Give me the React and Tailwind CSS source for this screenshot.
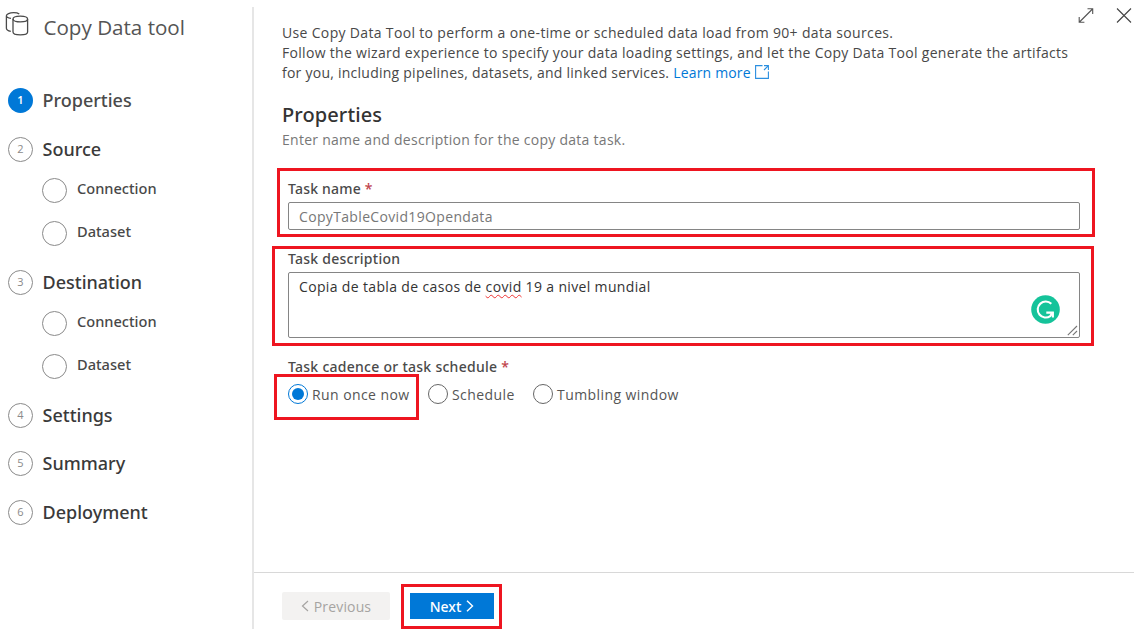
const steps = [
  { n: 1, label: "Properties", active: true },
  { n: 2, label: "Source", children: ["Connection", "Dataset"] },
  { n: 3, label: "Destination", children: ["Connection", "Dataset"] },
  { n: 4, label: "Settings" },
  { n: 5, label: "Summary" },
  { n: 6, label: "Deployment" },
];

function DatabaseIcon() {
  return (
    <svg className="block h-[28px] w-[26px]" viewBox="0 0 26 28" fill="none" stroke="#4a4a4a" strokeWidth="1.3">
      <ellipse cx="15.3" cy="8" rx="7.3" ry="2.900" />
      <path d="M8 8v13c0 1.700 3.300 2.900 7.300 2.900s7.300-1.200 7.300-2.900V8" />
      <path d="M14.300 3C13 2.100 11 1.700 8.700 1.700 4.700 1.700 1.400 2.900 1.400 4.700v12.600c0 1.500 1.600 2.600 4.400 3.100M1.400 4.700c0 1.300 1.600 2.200 4.600 2.600" />
    </svg>
  );
}

function Step({ step }) {
  return (
    <li>
      <div className="flex h-[48.5px] items-center">
        <span
          className={
            step.active
              ? "flex size-[25px] items-center justify-center rounded-full bg-[#0078d7] font-['Noto_Sans',sans-serif] text-[11px] font-semibold text-white"
              : "flex size-[25px] items-center justify-center rounded-full border border-[#8a8a8a] text-[11px] text-[#8a8a8a]"
          }
        >
          {step.n}
        </span>
        <span className={step.active ? "ml-[9.5px] font-['Noto_Sans',sans-serif] text-[18px] font-medium text-[#4a4a4a]" : "ml-[9.5px] font-['Noto_Sans',sans-serif] text-[18px] font-medium text-[#3a3a3a]"}>
          {step.label}
        </span>
      </div>
      {step.children && (
        <ul className="-mt-[4.75px] mb-[3.25px] pl-[34.4px]">
          {step.children.map((c) => (
            <li key={c} className="flex h-[43px] items-center">
              <span className="size-[25px] rounded-full border border-[#8a8a8a]" />
              <span className="mb-[1.5px] ml-[9.6px] font-['Noto_Sans',sans-serif] text-[14.6px] font-medium text-[#484848]">{c}</span>
            </li>
          ))}
        </ul>
      )}
    </li>
  );
}

function Radio({ label, checked, className }) {
  return (
    <label className={`flex items-center gap-1 ${className}`}>
      <span
        className={
          checked
            ? "flex size-5 items-center justify-center rounded-full border border-[#0078d7]"
            : "size-5 rounded-full border border-[#666]"
        }
      >
        {checked && <span className="size-3 rounded-full bg-[#0078d7]" />}
      </span>
      <span className="text-[14px] tracking-[0.42px] text-[#555]">{label}</span>
    </label>
  );
}

export default function App() {
  return (
    <div className="relative flex h-[636px] w-[1134px] overflow-hidden whitespace-nowrap bg-white font-['Open_Sans',sans-serif] text-[14px] text-[#484848]">
      <aside className="w-[252px] shrink-0 pt-[11px]">
        <header className="flex h-[32px] items-center pl-[5px]">
          <div className="mb-[5px]">
            <DatabaseIcon />
          </div>
          <h1 className="ml-[12.5px] text-[20.6px] text-[#555]">Copy Data tool</h1>
        </header>
        <ol className="mt-[33.25px] pl-2">
          {steps.map((s) => (
            <Step key={s.n} step={s} />
          ))}
        </ol>
      </aside>

      <main className="mt-[7px] flex h-[622px] min-w-0 flex-1 flex-col border-l-2 border-[#e6e6e6]">
        <div className="flex h-[16px] justify-end gap-[22px] pr-[2px]">
          <svg className="block size-4" viewBox="0 0 16 16" fill="none" stroke="#555" strokeWidth="1.1">
            <path d="M1.500 15 14.500 2M9.500 1.700h5.200v5.200M1.200 10v5.200h5.200" />
          </svg>
          <svg className="block size-4" viewBox="0 0 16 16" fill="none" stroke="#444" strokeWidth="1.1">
            <path d="m1 1.500 14 14M15 1.500l-14 14" />
          </svg>
        </div>

        <section className="flex-1 pl-[28px]">
          <div className="leading-5">
            <p className="tracking-[0.335px]">Use Copy Data Tool to perform a one-time or scheduled data load from 90+ data sources.</p>
            <p className="tracking-[0.305px]">Follow the wizard experience to specify your data loading settings, and let the Copy Data Tool generate the artifacts</p>
            <p className="flex items-center">
              <span className="tracking-[0.245px]">for you, including pipelines, datasets, and linked services.</span>
              <a className="ml-1 flex items-center gap-[4px] tracking-[0.17px] text-[#0078d7]">
                Learn more
                <svg className="mb-[2px] block size-[14px]" viewBox="0 0 14 14" fill="none" stroke="#2b8fe0" strokeWidth="1.1">
                  <path d="M7.500.6H.6v12.800h12.800V6.500M9 .6h4.400V5M13.200.8 9 5" />
                </svg>
              </a>
            </p>
          </div>

          <h2 className="mt-[18px] font-['Noto_Sans',sans-serif] text-[20px] font-medium leading-[28px] tracking-[0.1px] text-[#333]">Properties</h2>
          <p className="leading-[22px] tracking-[0.27px] text-[#777]">Enter name and description for the copy data task.</p>

          <form className="mt-[28px] w-[798px] pl-[6px]">
            <div className="h-[23px] font-['Noto_Sans',sans-serif] font-medium leading-[20px] tracking-[0.2px] text-[#4a4a4a]">
              Task name <span className="text-[#c0444c]">*</span>
            </div>
            <div className="flex h-[28px] items-center rounded-[2px] border border-[#858585] pl-[10px] tracking-[0.34px] text-[#777]">
              CopyTableCovid19Opendata
            </div>
            <div className="mt-[19px] h-[23px] font-['Noto_Sans',sans-serif] font-medium leading-[20px] tracking-[0.25px] text-[#4a4a4a]">Task description</div>
            <div className="relative h-[66px] rounded-[2px] border border-[#858585] pl-[10px] pt-[4px] leading-5 tracking-[0.35px] text-[#333]">
              Copia de tabla de casos de{" "}
              <span className="underline decoration-[#e33] decoration-wavy decoration-1 underline-offset-[2px] [text-decoration-skip-ink:none]">covid</span> 19 a nivel mundial
              <svg className="absolute right-[19px] top-[22px] block size-[29px]" viewBox="0 0 29 29" fill="none">
                <circle cx="14.500" cy="14.500" r="14.300" fill="#15c39a" />
                <path d="M20.300 8.800a8 8 0 1 0-1 12.300L21.500 17.500M15.300 17.600h7.500M21.900 16.800v5.800" stroke="#fff" strokeWidth="2.100" />
              </svg>
              <svg className="absolute bottom-[1px] right-[1px] block size-[11px]" viewBox="0 0 11 11" fill="none" stroke="#777" strokeWidth="1.100">
                <path d="M.8 10.200 10 1M5.800 10.200 10 6" />
              </svg>
            </div>
            <div className="mt-[19px] h-[20px] font-['Noto_Sans',sans-serif] font-medium leading-[20px] tracking-[0.27px] text-[#4a4a4a]">
              Task cadence or task schedule <span className="text-[#c0444c]">*</span>
            </div>
            <div className="mt-[7px] flex h-5">
              <Radio label="Run once now" checked className="w-[140px]" />
              <Radio label="Schedule" className="w-[105px]" />
              <Radio label="Tumbling window" className="w-[160px]" />
            </div>
          </form>
        </section>

        <footer className="flex h-[57px] items-start gap-5 border-t border-[#d8d8d8] pl-[28px] pt-[19px]">
          <button className="flex h-[28px] w-[108px] items-center justify-center gap-[5px] rounded-[2px] bg-[#f3f2f1] tracking-[0.15px] text-[#a6a4a2]">
            <svg className="block h-3 w-2" viewBox="0 0 8 12" fill="none" stroke="currentColor" strokeWidth="1.200">
              <path d="M7 1 1.500 6 7 11" />
            </svg>
            Previous
          </button>
          <button className="mt-[1px] flex h-[26px] w-[84px] items-center justify-center gap-[5px] bg-[#0078d7] font-['Noto_Sans',sans-serif] font-medium text-white">
            Next
            <svg className="block h-3 w-2" viewBox="0 0 8 12" fill="none" stroke="currentColor" strokeWidth="1.400">
              <path d="m1 .8 5.500 5.200L1 11.200" />
            </svg>
          </button>
        </footer>
      </main>

      {/* Highlight frames over the form */}
      <div className="pointer-events-none absolute left-[277px] top-[168px] h-[69px] w-[818px] border-3 border-[#ee1520]" />
      <div className="pointer-events-none absolute left-[272px] top-[246px] h-[100px] w-[822px] border-3 border-[#ee1520]" />
      <div className="pointer-events-none absolute left-[274px] top-[374px] h-[46px] w-[145px] border-3 border-[#ee1520]" />
      <div className="pointer-events-none absolute left-[401px] top-[584px] h-[45px] w-[101px] border-3 border-[#ee1520]" />
    </div>
  );
}
